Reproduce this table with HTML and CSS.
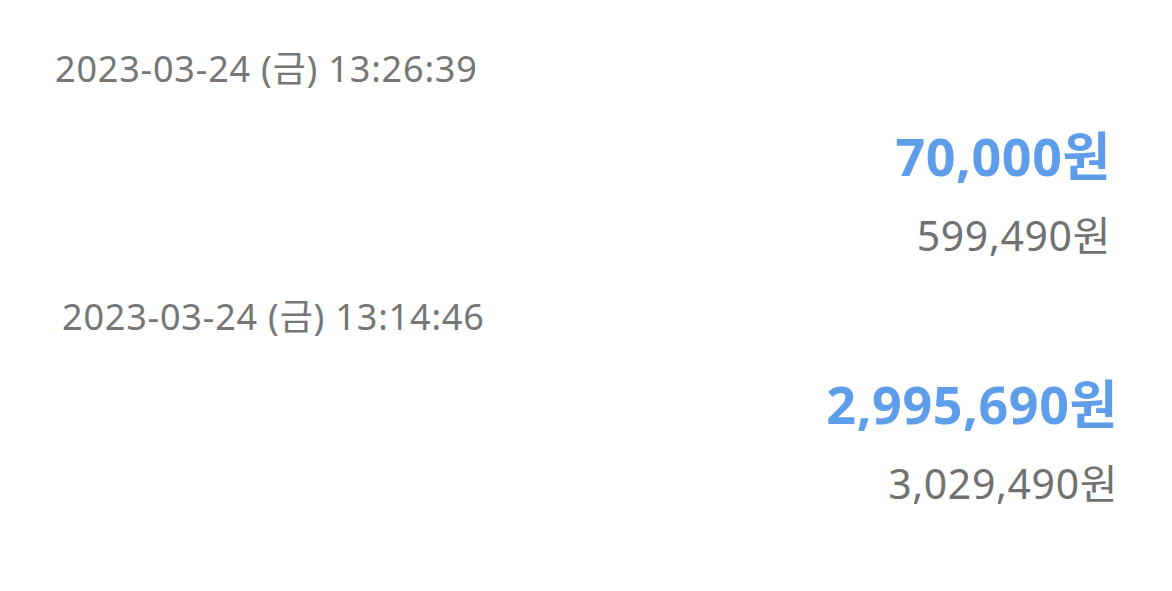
FILE: index.html
```html
<!DOCTYPE html>
<html lang="ko">
<head>
<meta charset="utf-8">
<link rel="stylesheet" href="styles.css">
</head>
<body>
<div class="list">
  <div class="entry entry-a">
    <div class="date">2023-03-24 (금) 13:26:39</div>
    <div class="amount">70,000원</div>
    <div class="balance">599,490원</div>
  </div>
  <div class="entry entry-b">
    <div class="date">2023-03-24 (금) 13:14:46</div>
    <div class="amount">2,995,690원</div>
    <div class="balance">3,029,490원</div>
  </div>
</div>
</body>
</html>
```
FILE: styles.css
```css
html, body {
  margin: 0;
  padding: 0;
  background: #ffffff;
}
body {
  font-family: "Noto Sans", "Noto Sans CJK KR", sans-serif;
  width: 1172px;
  height: 591px;
  overflow: hidden;
}
.list {
  display: flex;
  flex-direction: column;
  padding-top: 47px;
}
.entry {
  display: flex;
  flex-direction: column;
}
.entry-a {
  padding: 0 61px 0 55px;
  height: 248px;
}
.entry-b {
  padding: 0 54px 0 62px;
}
.date {
  font-size: 36px;
  line-height: 44px;
  letter-spacing: 0.8px;
  color: #767676;
}
.amount {
  align-self: flex-end;
  font-size: 52px;
  font-weight: 700;
  line-height: 60px;
  letter-spacing: 0.6px;
  color: #5e9de9;
  margin-top: 35px;
}
.balance {
  align-self: flex-end;
  font-size: 41px;
  line-height: 50px;
  letter-spacing: 0.6px;
  color: #717171;
  margin-top: 24px;
}
```
